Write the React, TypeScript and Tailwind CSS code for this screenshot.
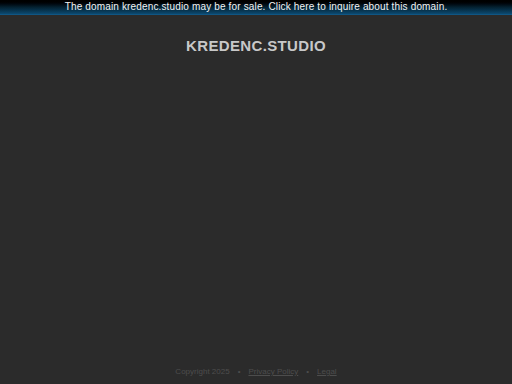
import React from 'react';

const App: React.FC = () => {
  return (
    <div className="flex h-[384px] w-[512px] flex-col bg-[#2b2b2b] font-['Liberation_Sans',Arial,sans-serif]">
      {/* Sale banner */}
      <div className="flex h-[15px] items-center justify-center border-b border-[#0f5684] bg-gradient-to-b from-[#000000] via-[#04202f] to-[#0c4a72]">
        <a className="text-[10px] leading-none tracking-[0.15px] text-[#f2f2f2]">
          The domain kredenc.studio may be for sale. Click here to inquire about this domain.
        </a>
      </div>

      {/* Title */}
      <div className="mt-[23px] flex justify-center">
        <h1 className="text-[15px] font-bold leading-none tracking-[0.35px] text-[#c8c8c8]">KREDENC.STUDIO</h1>
      </div>

      <div className="flex-1" />

      {/* Footer */}
      <div className="mb-[6px] flex items-center justify-center gap-[8px] text-[8px] text-[#4d4d4d]">
        <span>Copyright 2025</span>
        <span>•</span>
        <a className="underline">Privacy Policy</a>
        <span>•</span>
        <a className="underline">Legal</a>
      </div>
    </div>
  );
};

export default App;
